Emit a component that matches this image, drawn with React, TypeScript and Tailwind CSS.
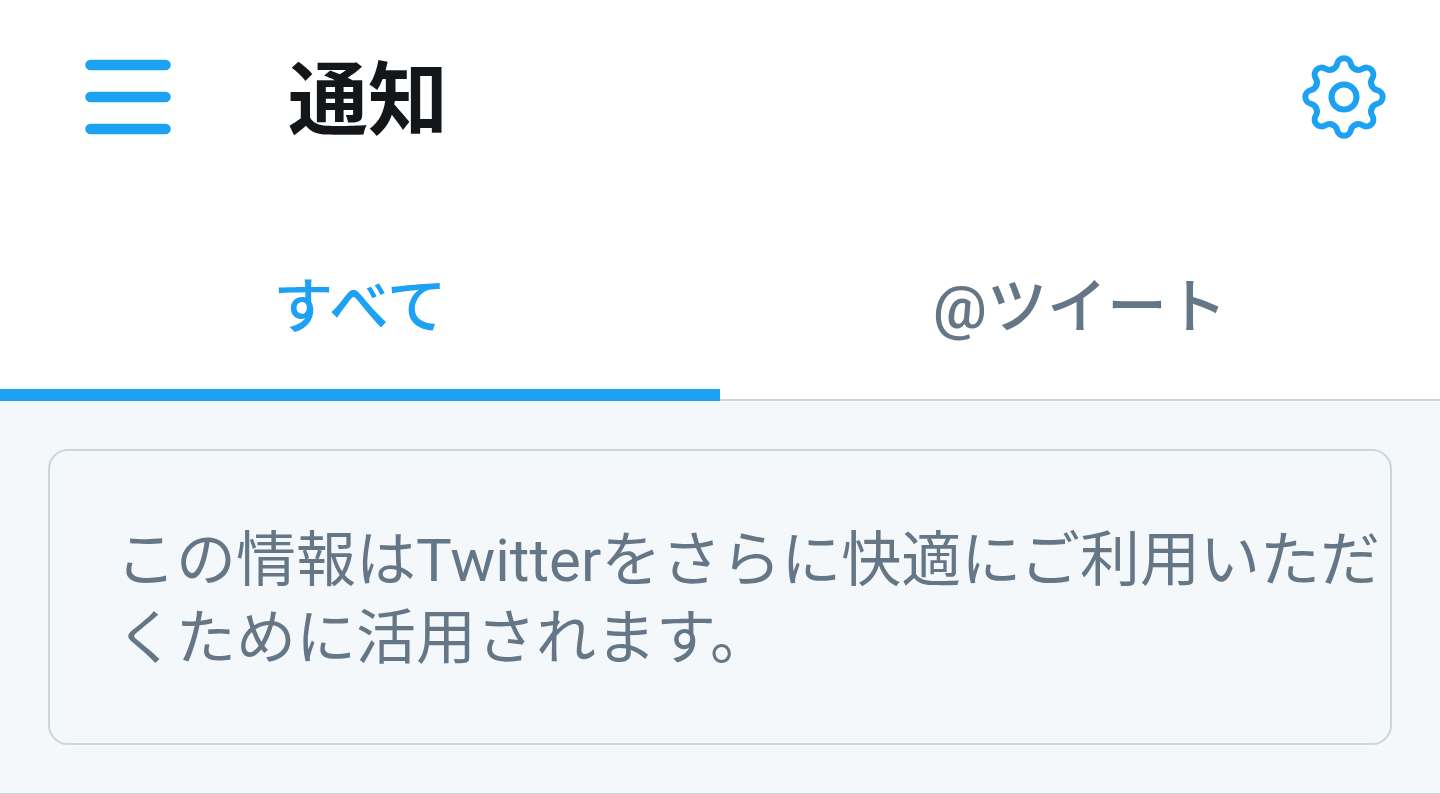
import { useState } from "react";

const tabs = [
  { id: "all", label: "すべて" },
  { id: "mentions", label: "@ツイート" },
];

const toothAngles = [0, 45, 90, 135, 180, 225, 270, 315];

function MenuIcon() {
  return (
    <svg
      viewBox="0 0 86 76"
      className="h-[76px] w-[86px]"
      fill="none"
      stroke="currentColor"
      strokeWidth="10.5"
      strokeLinecap="round"
      aria-hidden="true"
    >
      <path d="M5.5 6h75M5.5 38h75M5.5 70h75" />
    </svg>
  );
}

// One tooth, valley to valley, repeated around the centre.
function GearIcon() {
  return (
    <svg
      viewBox="-42 -42 84 84"
      className="size-[84px]"
      fill="none"
      stroke="currentColor"
      strokeWidth="6"
      strokeLinecap="round"
      aria-hidden="true"
    >
      {toothAngles.map((angle) => (
        <path
          key={angle}
          transform={`rotate(${angle})`}
          d="M-11.48 -27.72A7.4 7.4 0 0 0 -6.86 -33.07A7 7 0 0 1 6.86 -33.07A7.4 7.4 0 0 0 11.48 -27.72"
        />
      ))}
      <circle r="12.5" />
    </svg>
  );
}

export default function App() {
  const [active, setActive] = useState("all");

  return (
    <div className="bg-white font-[Roboto,'Noto_Sans_CJK_JP',sans-serif] text-[#657786]">
      <header className="flex h-[194px] items-center pr-[54px] pl-[85px] text-[#1da1f2]">
        <button type="button" aria-label="メニュー">
          <MenuIcon />
        </button>
        <h1 className="ml-[117px] flex-1 pt-2 text-[80px] leading-[96px] font-bold text-[#14171a]">
          通知
        </h1>
        <button type="button" aria-label="設定">
          <GearIcon />
        </button>
      </header>

      <div
        role="tablist"
        className="grid h-[207px] grid-cols-2 text-[60px] leading-[80px] font-medium"
      >
        {tabs.map((tab) => (
          <button
            key={tab.id}
            type="button"
            role="tab"
            aria-selected={active === tab.id}
            onClick={() => setActive(tab.id)}
            className={
              active === tab.id
                ? "border-b-12 border-[#1da1f2] pt-8 text-[#1da1f2]"
                : "border-b-2 border-[#ccd6dd] pt-[22px]"
            }
          >
            {tab.label}
          </button>
        ))}
      </div>

      <main className="border-b border-[#ccd6dd] bg-[#f5f8fa] p-12">
        <p className="rounded-[20px] border-2 border-[#ccd6dd] pt-[71px] pb-[65px] pl-[66px] text-[60px] leading-[78px]">
          この情報はTwitterをさらに快適にご利用いただくために活用されます。
        </p>
      </main>
    </div>
  );
}
